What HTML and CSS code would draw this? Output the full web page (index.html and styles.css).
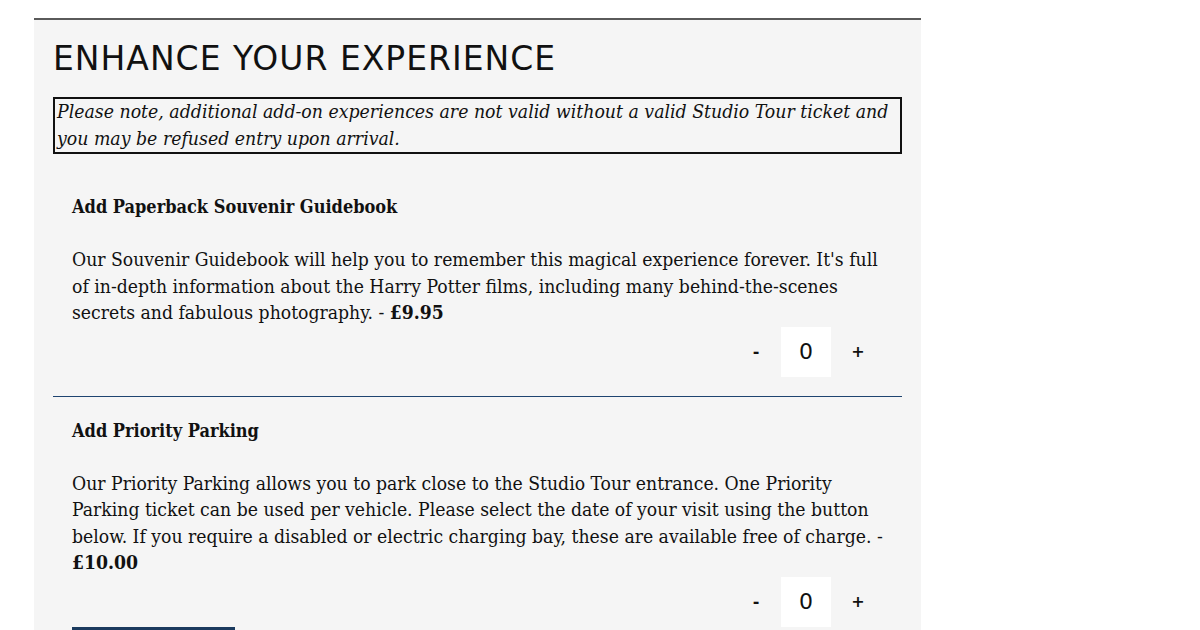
FILE: index.html
```html
<!DOCTYPE html>
<html lang="en">
<head>
    <meta charset="UTF-8">
    <meta name="viewport" content="width=device-width, initial-scale=1.0">
    <title>Enhance your experience</title>
    <link rel="stylesheet" href="styles.css">
</head>
<body>
    <div class="panel">
        <h2>ENHANCE YOUR EXPERIENCE</h2>

        <p class="notice">Please note, additional add-on experiences are not valid without a valid Studio Tour ticket and you may be refused entry upon arrival.</p>

        <div class="addon divider">
            <h3>Add Paperback Souvenir Guidebook</h3>
            <p>Our Souvenir Guidebook will help you to remember this magical experience forever. It's full of in-depth information about the Harry Potter films, including many behind-the-scenes secrets and fabulous photography. - <strong>£9.95</strong></p>
            <div class="qty">
                <button class="qty-btn">-</button>
                <span class="qty-value">0</span>
                <button class="qty-btn">+</button>
            </div>
        </div>

        <div class="addon">
            <h3>Add Priority Parking</h3>
            <p>Our Priority Parking allows you to park close to the Studio Tour entrance. One Priority Parking ticket can be used per vehicle. Please select the date of your visit using the button below. If you require a disabled or electric charging bay, these are available free of charge. - <strong>£10.00</strong></p>
            <div class="qty">
                <button class="qty-btn">-</button>
                <span class="qty-value">0</span>
                <button class="qty-btn">+</button>
            </div>
            <button class="date-btn">Select date</button>
        </div>
    </div>
</body>
</html>
```

FILE: styles.css
```css
body {
  margin: 0;
  background-color: #ffffff;
  color: #111111;
  font-family: "DejaVu Serif Condensed", "DejaVu Serif", serif;
  font-stretch: condensed;
}
.panel {
  margin: 18px 0 0 34px;
  width: 849px;
  min-height: 700px;
  padding: 0 19px;
  background-color: #f5f5f5;
  border-top: 2px solid #5a5a5a;
}
h2 {
  margin: 0;
  padding-top: 19px;
  font-family: "DejaVu Sans", sans-serif;
  font-stretch: normal;
  font-weight: normal;
  font-size: 33px;
  line-height: 40px;
  letter-spacing: 1px;
}
.notice {
  margin: 18px 0 10px 0;
  padding: 0 2px;
  border: 2px solid #111111;
  font-style: italic;
  font-size: 19.3px;
  line-height: 26.5px;
}
.addon {
  padding: 21px 15px 0 19px;
}
.divider {
  border-bottom: 1px solid #1e4470;
  padding-top: 30px;
  padding-bottom: 19px;
}
.addon h3 {
  margin: 0;
  font-size: 18px;
  line-height: 26px;
}
.addon p {
  margin: 27px 0 0 0;
  font-size: 19.2px;
  line-height: 26.5px;
}
.qty {
  display: flex;
  justify-content: flex-end;
  align-items: center;
  margin: 0 14px 0 0;
}
.qty-btn {
  border: none;
  background: none;
  padding: 0;
  width: 30px;
  font-family: "DejaVu Sans", sans-serif;
  font-stretch: normal;
  font-weight: bold;
  font-size: 16px;
  color: #111111;
}
.qty-value {
  width: 50px;
  height: 50px;
  margin: 0 12px 0 10px;
  background-color: #ffffff;
  display: flex;
  justify-content: center;
  align-items: center;
  font-family: "DejaVu Sans", sans-serif;
  font-stretch: normal;
  font-size: 22px;
}
.date-btn {
  display: block;
  margin-top: 0;
  width: 163px;
  height: 46px;
  padding-top: 14px;
  border: none;
  background-color: #1b3a5e;
  color: #ffffff;
  font-family: "DejaVu Serif", serif;
  font-size: 16px;
}
```
